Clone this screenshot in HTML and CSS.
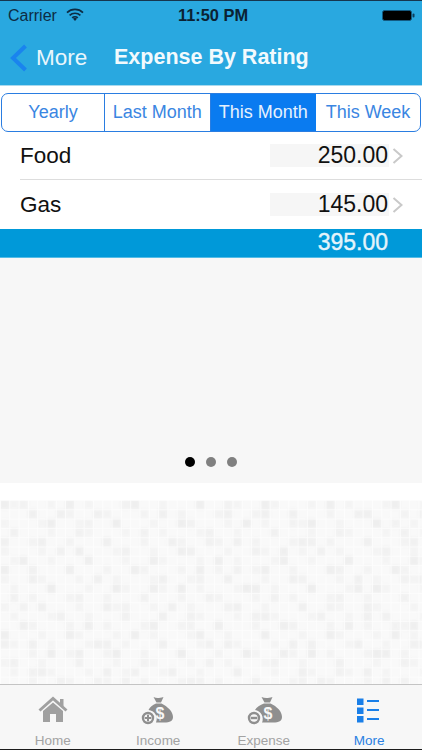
FILE: index.html
```html
<!DOCTYPE html>
<html lang="en">
<head>
<meta charset="utf-8">
<title>Expense By Rating</title>
<link rel="stylesheet" href="styles.css">
</head>
<body>
<div class="app">
  <header class="nav">
    <div class="status">
      <span class="carrier">Carrier</span>
      <svg class="wifi" viewBox="0 0 18 13" width="18" height="13"><path d="M1 4.600a11.500 11.500 0 0 1 16 0M3.600 7.400a7.800 7.800 0 0 1 10.800 0M6.200 9.900a4 4 0 0 1 5.600 0" fill="none" stroke="#0d2c44" stroke-width="1.700"/><path d="M9 13l-2-2.300a3 3 0 0 1 4 0z" fill="#0d2c44"/></svg>
      <span class="time">11:50 PM</span>
      <svg class="battery" viewBox="0 0 33 11" width="33" height="11"><rect x="0.500" y="0.500" width="29" height="10" rx="2" fill="#000" stroke="#135a82"/><rect x="30.500" y="3.500" width="2" height="4" rx="1" fill="#0d3f5e"/></svg>
    </div>
    <div class="bar">
      <svg class="back" viewBox="0 0 18 28" width="18" height="28"><path d="M15.500 2L3 14l12.500 12" fill="none" stroke="#1a84ee" stroke-width="4"/></svg>
      <span class="back-label">More</span>
      <h1 class="title">Expense By Rating</h1>
    </div>
  </header>

  <div class="segments">
    <span class="seg">Yearly</span>
    <span class="seg">Last Month</span>
    <span class="seg seg-on">This Month</span>
    <span class="seg">This Week</span>
  </div>

  <div class="row row-line">
    <span class="name">Food</span>
    <span class="amount">250.00</span>
    <svg class="chev" viewBox="0 0 11 16" width="11" height="16"><path d="M1.500 1l8 7-8 7" fill="none" stroke="#c9c9c9" stroke-width="2"/></svg>
  </div>
  <div class="row">
    <span class="name">Gas</span>
    <span class="amount">145.00</span>
    <svg class="chev" viewBox="0 0 11 16" width="11" height="16"><path d="M1.500 1l8 7-8 7" fill="none" stroke="#c9c9c9" stroke-width="2"/></svg>
  </div>
  <div class="total"><span>395.00</span></div>

  <section class="chart">
    <i class="dot dot-on"></i><i class="dot"></i><i class="dot"></i>
  </section>

  <div class="gap"></div>

  <svg class="tiles" width="422" height="184" viewBox="0 0 422 184" preserveAspectRatio="none">
    <defs>
      <filter id="soft"><feGaussianBlur stdDeviation="1.100"/></filter>
      <pattern id="p1" width="65.100" height="65.100" patternUnits="userSpaceOnUse">
        <rect x="0" y="0" width="9.300" height="9.300" fill="#e6e6e6"/><rect x="27.900" y="9.300" width="9.300" height="9.300" fill="#e9e9e9"/><rect x="46.500" y="18.600" width="9.300" height="9.300" fill="#e4e4e4"/><rect x="9.300" y="27.900" width="9.300" height="9.300" fill="#ebebeb"/><rect x="37.200" y="37.200" width="9.300" height="9.300" fill="#e8e8e8"/><rect x="55.800" y="46.500" width="9.300" height="9.300" fill="#eaeaea"/><rect x="18.600" y="55.800" width="9.300" height="9.300" fill="#e6e6e6"/>
      </pattern>
      <pattern id="p2" width="102.300" height="102.300" patternUnits="userSpaceOnUse">
        <rect x="18.600" y="0" width="9.300" height="9.300" fill="#ececec"/><rect x="55.800" y="9.300" width="9.300" height="9.300" fill="#e8e8e8"/><rect x="83.700" y="18.600" width="9.300" height="9.300" fill="#ededed"/><rect x="0" y="37.200" width="9.300" height="9.300" fill="#eaeaea"/><rect x="74.400" y="46.500" width="9.300" height="9.300" fill="#e7e7e7"/><rect x="27.900" y="65.100" width="9.300" height="9.300" fill="#ebebeb"/><rect x="93" y="74.400" width="9.300" height="9.300" fill="#ececec"/><rect x="46.500" y="83.700" width="9.300" height="9.300" fill="#e6e6e6"/>
      </pattern>
      <pattern id="p3" width="37.200" height="27.900" patternUnits="userSpaceOnUse">
        <rect x="9.300" y="0" width="9.300" height="9.300" fill="#f1f1f1"/><rect x="27.900" y="9.300" width="9.300" height="9.300" fill="#efefef"/><rect x="0" y="18.600" width="9.300" height="9.300" fill="#f0f0f0"/>
      </pattern>
      <pattern id="grid" width="9.300" height="9.300" patternUnits="userSpaceOnUse">
        <path d="M0 0H9.300M0 0V9.300" stroke="#fff" stroke-width="1.600" opacity="0.8"/>
      </pattern>
    </defs>
    <rect width="422" height="184" fill="#f9f9f9"/>
    <g filter="url(#soft)" opacity="0.5">
      <rect width="422" height="184" fill="url(#p3)"/>
      <rect width="422" height="184" fill="url(#p2)"/>
      <rect width="422" height="184" fill="url(#p1)"/>
    </g>
    <rect width="422" height="184" fill="url(#grid)"/>
  </svg>

  <nav class="tabs">
    <div class="tab">
      <svg class="tab-icon" viewBox="0 0 40 30" width="40" height="30"><path d="M6.500 15.500L20 3.500l13.500 12" fill="none" stroke="#a0a0a0" stroke-width="3"/><rect x="27" y="4" width="3.500" height="7" fill="#a0a0a0"/><path d="M20 7.500L30 16v11h-7v-8h-6v8h-7V16z" fill="#a0a0a0"/></svg>
      <span>Home</span>
    </div>
    <div class="tab">
      <svg class="tab-icon" viewBox="0 0 40 30" width="40" height="30"><path d="M15.500 2c3 1.300 5 1.300 10 0l-2.500 5.500h-4.500z" fill="#8f8f8f"/><path d="M18 8.500h5.500c6 3 11.500 8 11.500 13.500 0 3.800-3 5.500-9 5.500h-8A9 9 0 0 0 10.500 15c1.300-2.700 4-4.800 7.500-6.500z" fill="#8f8f8f"/><circle cx="10" cy="23" r="5" fill="#f7f7f7" stroke="#8f8f8f" stroke-width="2.400"/><path d="M6.800 23h6.400M10 19.800v6.400" stroke="#8f8f8f" stroke-width="2"/><text x="22" y="24" class="dollar">$</text></svg>
      <span>Income</span>
    </div>
    <div class="tab">
      <svg class="tab-icon" viewBox="0 0 40 30" width="40" height="30"><path d="M17.500 2c3.500 1.300 6 1.300 11 0l-2.500 5.500h-5.500z" fill="#8f8f8f"/><path d="M20 8.500h6.500c6.500 3 11.500 8 11.500 13.500 0 3.800-3 5.500-9 5.500h-11A9 9 0 0 0 11 15c1.500-2.700 5-4.800 9-6.500z" fill="#8f8f8f"/><circle cx="10" cy="23" r="5" fill="#f7f7f7" stroke="#8f8f8f" stroke-width="2.400"/><path d="M6.800 23h6.400" stroke="#8f8f8f" stroke-width="2.400"/><text x="24" y="24" class="dollar">$</text></svg>
      <span>Expense</span>
    </div>
    <div class="tab tab-on">
      <svg class="tab-icon" viewBox="0 0 40 30" width="40" height="30"><path d="M8 3.500h6.500V10H8zM8 12.500h6.500V19H8zM8 21h6.500v6.500H8z" fill="#1a7fe8"/><path d="M18 6h12M18 15h12M18 24h12" stroke="#1a7fe8" stroke-width="2"/></svg>
      <span>More</span>
    </div>
  </nav>
</div>
</body>
</html>
```
FILE: styles.css
```css
* { box-sizing: border-box; }
html, body { margin: 0; padding: 0; }
body {
  width: 422px;
  height: 750px;
  overflow: hidden;
  background: #fff;
  font-family: "Liberation Sans", Arial, sans-serif;
}
.app {
  display: flex;
  flex-direction: column;
  width: 422px;
  height: 750px;
  border-top: 1px solid #16364f;
  border-bottom: 1px solid #1c1c1c;
}
.nav {
  height: 85px;
  flex: none;
  background: #29a8e0;
  border-bottom: 1px solid #a9d9ee;
}
.status {
  display: grid;
  grid-template-columns: 58px 26px 1fr 33px;
  align-items: center;
  height: 29px;
  padding: 0 7px 0 8px;
  color: #0d2c44;
}
.carrier { font-size: 16px; }
.wifi { margin-left: 0; margin-top: -2px; }
.time {
  font-size: 16.400px;
  font-weight: bold;
  text-align: center;
  color: #0b2233;
  padding-right: 48px;
}
.bar {
  display: flex;
  align-items: center;
  height: 55px;
  padding-left: 10px;
  color: #fff;
}
.back { flex: none; }
.back-label { font-size: 22.500px; margin-left: 8px; width: 78px; color: #eaf6fc; }
.title { margin: 0; font-size: 21.500px; font-weight: bold; color: #f2fafd; white-space: nowrap; }

.segments {
  display: grid;
  grid-template-columns: 103px 105.500px 105.500px 1fr;
  flex: none;
  height: 39px;
  margin: 7px 1px 0;
  border: 1.500px solid #2a7de1;
  border-radius: 7px;
  overflow: hidden;
}
.seg {
  display: flex;
  align-items: center;
  justify-content: center;
  font-size: 18px;
  color: #3a86e2;
  border-right: 1.500px solid #2a7de1;
}
.seg:last-child, .seg-on { border-right: 0; }
.seg-on { background: #0a7bf0; color: #e7f1fd; }

.row {
  display: flex;
  align-items: center;
  flex: none;
  height: 49px;
  margin-left: 20px;
  color: #111;
}
.row-line { height: 48px; border-bottom: 1.500px solid #ddd; }
.name { flex: 1; font-size: 22.500px; }
.amount {
  width: 119px;
  height: 23px;
  padding-right: 1px;
  font-size: 23px;
  line-height: 23px;
  text-align: right;
  background: #f6f6f6;
}
.chev { flex: none; margin: 0 19px 0 3px; }

.total {
  flex: none;
  height: 29px;
  padding-right: 34px;
  background: #0099d9;
  border-bottom: 1px solid #54bce6;
  color: #e4f4fb;
  font-size: 23px;
  line-height: 27px;
  text-align: right;
  -webkit-text-stroke: 0.4px #e4f4fb;
}
.chart {
  display: flex;
  flex: none;
  height: 225px;
  padding-bottom: 16px;
  align-items: flex-end;
  justify-content: center;
  gap: 11px;
  background: #f7f7f7;
}
.dot {
  width: 10px;
  height: 10px;
  border-radius: 50%;
  background: #808080;
}
.dot-on { background: #000; }
.gap { flex: none; height: 17px; background: #fff; }
.tiles { display: block; flex: none; }
.tabs {
  display: grid;
  grid-template-columns: repeat(4, 1fr);
  flex: 1;
  background: #f7f7f7;
  border-top: 1px solid #c4c4c4;
}
.tab {
  display: flex;
  flex-direction: column;
  align-items: center;
  padding-top: 10px;
  color: #a3a3a3;
  font-size: 13.500px;
  line-height: 16px;
}
.tab-on { color: #2a80e2; }
.tab-icon { display: block; margin-bottom: 8px; }
.dollar {
  font-family: "Liberation Sans", Arial, sans-serif;
  font-size: 16px;
  font-weight: bold;
  fill: #f7f7f7;
  text-anchor: middle;
}
```
